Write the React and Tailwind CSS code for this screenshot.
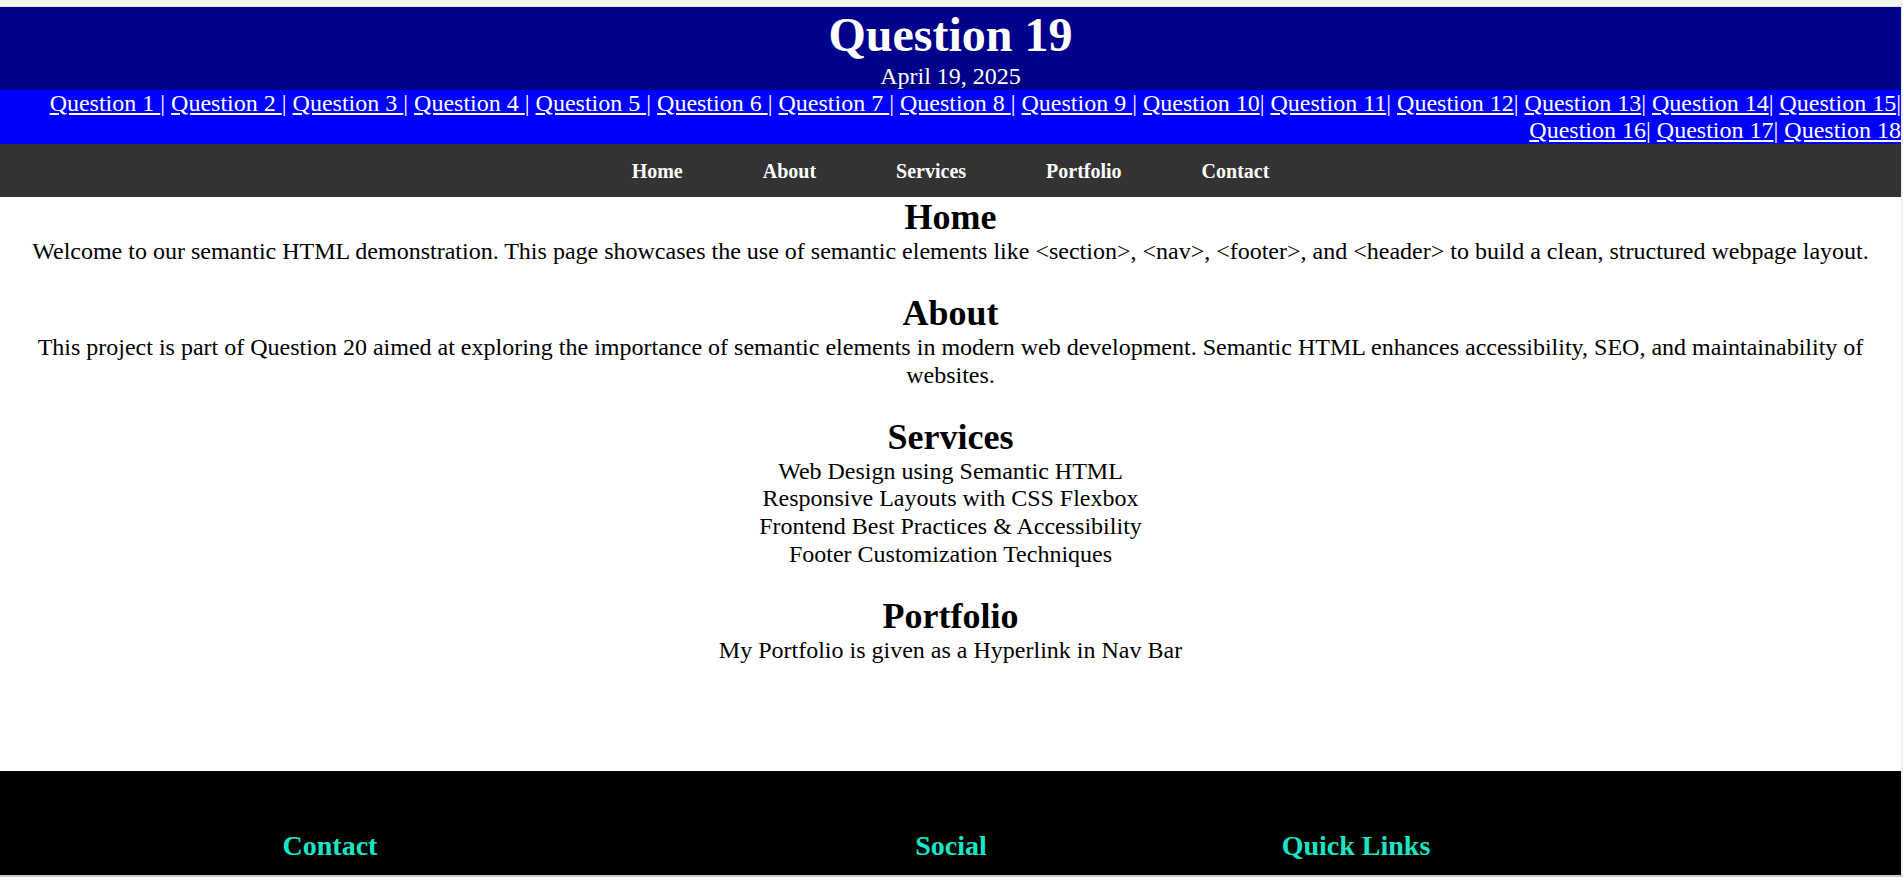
import React from "react";

const links = [];
for (let i = 1; i <= 18; i++) {
  links.push(i);
}

function QuestionLinks() {
  return (
    <div className="bg-[#0000ff] text-right text-[24px] leading-[27px] text-white">
      {links.map((n) => (
        <React.Fragment key={n}>
          <a href="#" className="underline text-white">
            {n < 10 ? `Question ${n} ` : `Question ${n}`}
          </a>
          {n < 18 ? "|" : ""}
          {n < 18 ? " " : ""}
        </React.Fragment>
      ))}
    </div>
  );
}

export default function App() {
  return (
    <div
      className="h-[877px] w-full flex flex-col overflow-hidden bg-[#f4f6ef]"
      style={{ fontFamily: '"Liberation Serif", "Times New Roman", serif' }}
    >
      <div className="h-[7px] shrink-0 bg-[#f4f6ef] border-b border-[#dfe3e0]" />
      <div className="flex flex-1 min-h-0">
        <div className="flex-1 min-w-0 flex flex-col bg-white">
          <header className="bg-[#00008b] text-white text-center">
            <h1 className="text-[48px] font-bold leading-[55px] m-0">Question 19</h1>
            <div className="text-[24px] leading-[28px]">April 19, 2025</div>
          </header>
          <QuestionLinks />
          <nav className="bg-[#333333] flex justify-center gap-[80px] pt-[16px] pb-[14px]">
            {["Home", "About", "Services", "Portfolio", "Contact"].map((t) => (
              <a key={t} href="#" className="text-white font-bold text-[20px] leading-[23px]">
                {t}
              </a>
            ))}
          </nav>
          <main className="text-center text-black text-[24px] leading-[27.6px] flex flex-col gap-[27.5px]">
            <section>
              <h2 className="text-[36px] font-bold leading-[41px]">Home</h2>
              <p>
                Welcome to our semantic HTML demonstration. This page showcases the use of semantic elements like
                &lt;section&gt;, &lt;nav&gt;, &lt;footer&gt;, and &lt;header&gt; to build a clean, structured webpage
                layout.
              </p>
            </section>
            <section>
              <h2 className="text-[36px] font-bold leading-[41px]">About</h2>
              <p>
                This project is part of Question 20 aimed at exploring the importance of semantic elements in modern web
                development. Semantic HTML enhances accessibility, SEO, and maintainability of websites.
              </p>
            </section>
            <section>
              <h2 className="text-[36px] font-bold leading-[41px]">Services</h2>
              <ul>
                <li>Web Design using Semantic HTML</li>
                <li>Responsive Layouts with CSS Flexbox</li>
                <li>Frontend Best Practices &amp; Accessibility</li>
                <li>Footer Customization Techniques</li>
              </ul>
            </section>
            <section>
              <h2 className="text-[36px] font-bold leading-[41px]">Portfolio</h2>
              <p>My Portfolio is given as a Hyperlink in Nav Bar</p>
            </section>
          </main>
          <footer className="mt-[107px] flex-1 bg-black pt-[59px] grid grid-cols-[660px_582px_228px]">
            <h3 className="text-center text-[28px] font-bold leading-[32px] text-[#17e6c6]">Contact</h3>
            <h3 className="text-center text-[28px] font-bold leading-[32px] text-[#17e6c6]">Social</h3>
            <h3 className="text-center text-[28px] font-bold leading-[32px] text-[#17e6c6]">Quick Links</h3>
          </footer>
        </div>
        <div className="w-[2px] shrink-0 bg-[#eef0ee]" />
      </div>
      <div className="h-[2px] shrink-0 bg-[#c3ccd2]" />
    </div>
  );
}
